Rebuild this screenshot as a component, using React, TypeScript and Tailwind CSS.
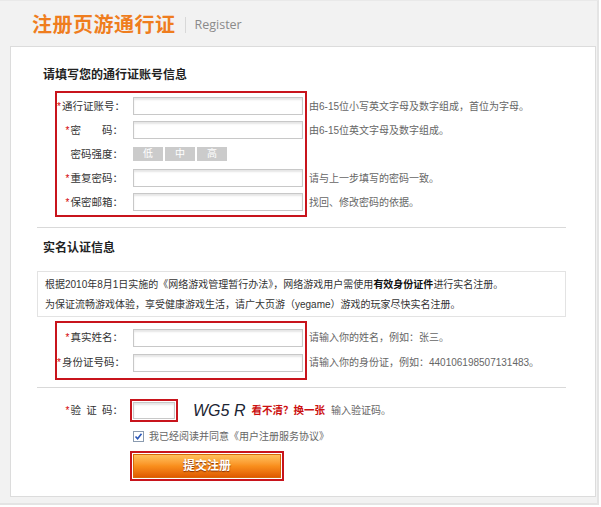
import React from "react";

const FONT = "font-['Liberation_Sans','Noto_Sans_CJK_SC',sans-serif]";

function Star() {
  return <span className="text-[#d40000] text-[10px] mr-[1px]">*</span>;
}

function Input({ w = 170 }: { w?: number }) {
  return (
    <div
      className="h-[18px] border border-[#c8c8c8] bg-white shadow-[inset_0_2px_2px_rgba(0,0,0,0.10)]"
      style={{ width: w }}
    />
  );
}

function Label({ star, children }: { star?: boolean; children: React.ReactNode }) {
  return (
    <div className="w-[66px] text-right text-[10.5px] text-[#333] whitespace-nowrap leading-none">
      {star && <Star />}
      {children}
    </div>
  );
}

export default function App() {
  const hints1 = [
    "由6-15位小写英文字母及数字组成，首位为字母。",
    "由6-15位英文字母及数字组成。",
    "",
    "请与上一步填写的密码一致。",
    "找回、修改密码的依据。",
  ];
  return (
    <div className={`${FONT} w-[599px] h-[505px] bg-[#f2f2f2] border-r-2 border-b-2 border-[#e4e4e4] border-t border-t-[#e9e9e9]`}>
      {/* header */}
      <div className="h-[45px] flex items-center pl-[32px] pt-[3px]">
        <span className="text-[20px] font-bold text-[#ef7d1e] tracking-[0.5px] leading-none">注册页游通行证</span>
        <span className="ml-[9px] h-[16px] border-l border-[#d8d8d8]" />
        <span className="ml-[9px] text-[12.5px] text-[#8a8a8a] font-['Open_Sans',sans-serif]">Register</span>
      </div>

      {/* panel */}
      <div className="ml-[10px] w-[586px] h-[451px] bg-white border border-[#dcdcdc]">
        <div className="pl-[32px] pt-[20px] text-[12px] font-bold text-[#222] leading-[16px]">请填写您的通行证账号信息</div>

        <div className="flex ml-[44px] mt-[8px]">
          <div className="border-2 border-[#c8141c] w-[252px] py-px">
            <div className="h-[24px] flex items-center">
              <Label star>通行证账号：</Label>
              <div className="ml-[10px]"><Input /></div>
            </div>
            <div className="h-[24px] flex items-center">
              <Label star>密　　码：</Label>
              <div className="ml-[10px]"><Input /></div>
            </div>
            <div className="h-[24px] flex items-center">
              <Label>密码强度：</Label>
              <div className="ml-[10px] flex gap-[2px]">
                {["低", "中", "高"].map((t) => (
                  <div key={t} className="w-[30px] h-[14px] bg-[#cbcbcb] text-white text-[10px] leading-[14px] text-center">{t}</div>
                ))}
              </div>
            </div>
            <div className="h-[24px] flex items-center">
              <Label star>重复密码：</Label>
              <div className="ml-[10px]"><Input /></div>
            </div>
            <div className="h-[24px] flex items-center">
              <Label star>保密邮箱：</Label>
              <div className="ml-[10px]"><Input /></div>
            </div>
          </div>
          <div className="ml-[2px] pt-[3px]">
            {hints1.map((h, i) => (
              <div key={i} className="h-[24px] flex items-center text-[10px] text-[#666] whitespace-nowrap">{h}</div>
            ))}
          </div>
        </div>

        <div className="ml-[26px] w-[529px] mt-[10px] border-t border-[#d9d9d9]" />

        <div className="pl-[32px] pt-[12px] text-[12px] font-bold text-[#222] leading-[16px]">实名认证信息</div>

        <div className="ml-[26px] w-[529px] mt-[15px] h-[46px] border border-[#e3e3e3] pl-[7px] pt-[3px] text-[10px] text-[#333] leading-[20px] whitespace-nowrap">
          <div>根据2010年8月1日实施的《网络游戏管理暂行办法》，网络游戏用户需使用<span className="font-bold text-[#111]">有效身份证件</span>进行实名注册。</div>
          <div>为保证流畅游戏体验，享受健康游戏生活，请广大页游（yegame）游戏的玩家尽快实名注册。</div>
        </div>

        <div className="flex ml-[44px] mt-[4px]">
          <div className="border-2 border-[#c8141c] w-[252px] pt-[2px] pb-[3px]">
            <div className="h-[25px] flex items-center">
              <Label star>真实姓名：</Label>
              <div className="ml-[10px]"><Input /></div>
            </div>
            <div className="h-[25px] flex items-center">
              <Label star>身份证号码：</Label>
              <div className="ml-[10px]"><Input /></div>
            </div>
          </div>
          <div className="ml-[2px] pt-[4px]">
            <div className="h-[25px] flex items-center text-[10px] text-[#666] whitespace-nowrap">请输入你的姓名，例如：张三。</div>
            <div className="h-[25px] flex items-center text-[10px] text-[#666] whitespace-nowrap">请输入你的身份证，例如：440106198507131483。</div>
          </div>
        </div>

        <div className="ml-[26px] w-[529px] mt-[7px] border-t border-[#d9d9d9]" />

        {/* captcha */}
        <div className="flex items-center ml-[46px] mt-[11px] h-[23px]">
          <Label star>验&ensp;证&ensp;码：</Label>
          <div className="ml-[7px] w-[48px] h-[23px] border-2 border-[#c8141c] p-px">
            <div className="w-full h-full border border-[#c8c8c8] shadow-[inset_0_2px_2px_rgba(0,0,0,0.10)]" />
          </div>
          <div className="ml-[15px] text-[16px] italic text-[#1b2433] font-['Liberation_Sans',sans-serif] leading-none whitespace-nowrap">
            WG5 R
          </div>
          <div className="ml-[6px] text-[10.5px] font-bold text-[#cc1111] whitespace-nowrap">看不清？换一张</div>
          <div className="ml-[6px] text-[10px] text-[#666] whitespace-nowrap">输入验证码。</div>
        </div>

        <div className="flex items-center ml-[122px] mt-[8px] h-[12px]">
          <div className="w-[11px] h-[11px] border border-[#8a9bb0] bg-white flex items-center justify-center">
            <svg width="9" height="9" viewBox="0 0 9 9">
              <path d="M1.5 4.5 L3.6 6.8 L7.5 1.8" stroke="#2a57b8" strokeWidth="1.6" fill="none" />
            </svg>
          </div>
          <span className="ml-[5px] text-[10px] text-[#666] whitespace-nowrap">我已经阅读并同意《用户注册服务协议》</span>
        </div>

        <div className="ml-[119px] mt-[9px] w-[154px] h-[30px] border-2 border-[#c8141c] p-px">
          <div className="w-full h-full bg-gradient-to-b from-[#ffc15a] via-[#f98f1c] to-[#e05a00] border border-[#d66a08] flex items-center justify-center">
            <span className="text-white text-[12px] font-bold [text-shadow:0_1px_1px_rgba(120,40,0,0.9)]">提交注册</span>
          </div>
        </div>
      </div>
    </div>
  );
}
